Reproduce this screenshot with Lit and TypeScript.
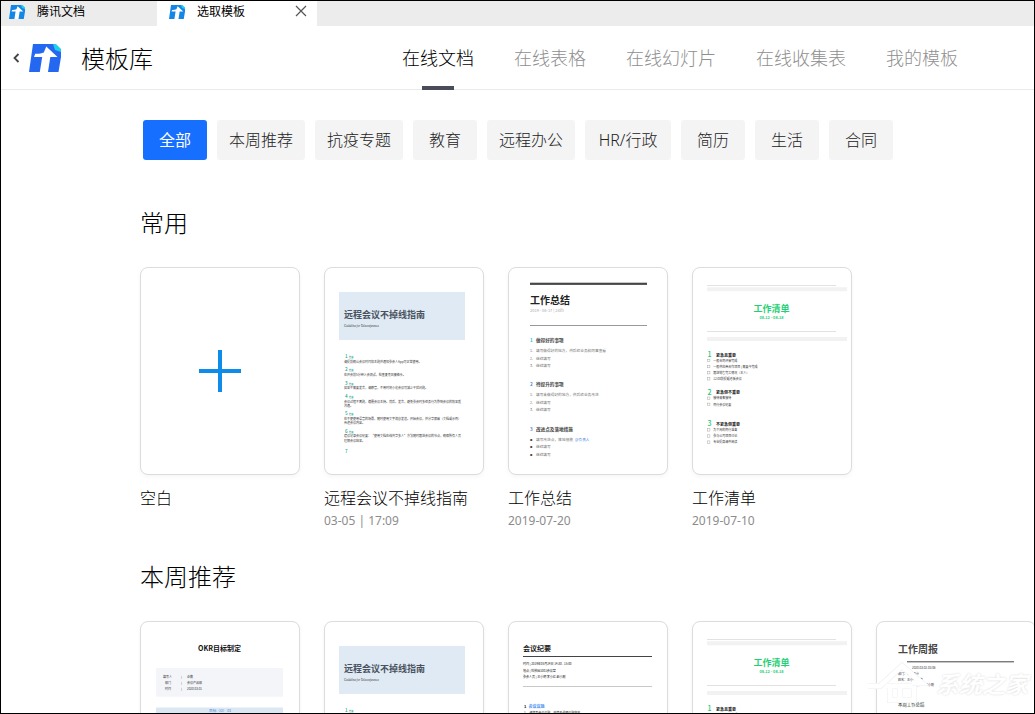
import { LitElement, html, svg, css } from "lit";
import { customElement, property, state } from "lit/decorators.js";
import { classMap } from "lit/directives/class-map.js";

type Line = [x: number, y: number, text: string, cls?: string];

const lines = (items: Line[]) =>
  items.map(([x, y, text, cls]) => svg`<text class=${cls ?? "body"} x=${x} y=${y}>${text}</text>`);

const guide = () => svg`
  <rect x="15" y="25" width="126" height="48" fill="#dfeaf4"/>
  <text class="kai" x="20" y="51">远程会议不掉线指南</text>
  <text class="en" x="20" y="59.5">Guideline for Teleconference</text>
  ${[90, 103.5, 117, 130.5, 147.5, 165, 185].map(
    (y, i) => svg`<text class="step" x="21" y=${y + 0.8}>${i + 1}</text><text class="tag" x="24.5" y=${y + 0.8}>${i < 6 ? "准备" : "…"}</text>`
  )}
  ${lines([
    [20, 95.5, "请提前确认会议时间和主题并通知参会人App可正常使用。"],
    [20, 109, "在开会前5分钟入会测试，检查麦克风摄像头。"],
    [20, 122.3, "如果不需要发言，请静音，不用时将小化会议可减少干扰问题。"],
    [20, 136, "会议过程不离题，遵循会议主持。然后，发言，避免参会时多任务行为影响会议的效果质"],
    [20, 140.2, "沟通。"],
    [20, 153, "在不便使用语音的场景，随时使用文字消息发送。开始会议，并分享屏幕（文档或示例）"],
    [20, 157.4, "传递会议内容。"],
    [20, 170.4, "建议记录会议纪要：“使用文档在线共享多人”方法随时跟进会议的节点，确保所有人员"],
    [20, 174.8, "理解会议结果。"],
  ])}`;

const summary = () => svg`
  <rect x="22" y="15.7" width="117" height="2.2" fill="#4a4646"/>
  <text class="h10" x="22" y="37">工作总结</text>
  <text class="pale" x="22" y="45">2019 - 06-17 | 24th</text>
  <rect x="22" y="58" width="117" height="1" fill="#999"/>
  ${[
    [73.3, "做得好的事项", "#27c3c6", "填写做得好的地方，供后续业务和同事查看", "继续填写", "继续填写"],
    [117.3, "待提升的事项", "#3f84d9", "填写未做得好的地方，供后续业务改进", "继续填写", "继续填写"],
    [161.7, "改进点及落地措施", "#6a7fd0", "填写改进点，落地措施", "继续填写", "继续填写"],
  ].map(([y, title, color, ...items], s) => svg`
    <text class="h45" x="22" y=${+y + 2} style="fill:${color}">${s + 1}</text>
    <text class="h45" x="28" y=${+y + 1.8}>${title}</text>
    ${items.map((t, i) => svg`
      <text class=${s === 2 ? "dot" : "item"} x="22" y=${+y + 11.8 + i * 7.6}>${s === 2 ? "●" : `${i + 1}.`}</text>
      <text class="item" x="28" y=${+y + 11.8 + i * 7.6}>${t}</text>`)}`)}
  <text class="blue" x="67" y="173.5">@负责人</text>`;

const checklist = () => svg`
  <path d="M15 18.5h129M15 64.5h129" stroke="#e2e2e2" stroke-width="1.2"/>
  <path d="M15 22.3h140M15 72h140" stroke="#f2f2f3" stroke-width="4"/>
  <text class="green9" x="79.5" y="45">工作清单</text>
  <text class="green3" x="79.5" y="52.3">08.12 - 08.18</text>
  ${[
    [87.3, "紧急且重要", "一般合同评审完成", "一般供应商合作项目 | 需要今完成", "跟进销售完工情况（本人）", "12:00前提醒老板会议"],
    [125, "紧急但不重要", "接待来客接待", "例行会议纪要"],
    [156.7, "不紧急但重要", "为下周的例行准备", "参与公司项目讨论", "专业提高课件阅读"],
  ].map(([y, title, ...items], s) => svg`
    <text class="num" x="15.5" y=${+y + 2.6}>${s + 1}</text>
    <text class="h4" x="24" y=${+y + 2.2}>${title}</text>
    ${items.map((t, i) => svg`
      <rect x="15.5" y=${+y + 5 + i * 6.1} width="2.4" height="2.4" fill="none" stroke="#aaa" stroke-width="0.5"/>
      <text class="body" x="21.3" y=${+y + 7.4 + i * 6.1}>${t}</text>`)}`)}`;

const okr = () => svg`
  <text class="h75" x="79.5" y="30.3">OKR目标制定</text>
  <rect x="16" y="47" width="127" height="28.7" fill="#f4f5f9"/>
  ${lines([
    [23, 57, "填写人"], [41, 57, "|"], [47, 57, "企鹅"],
    [25, 63, "部门"], [41, 63, "|"], [47, 63, "会议产品部"],
    [25, 69, "时间"], [41, 69, "|"], [47, 69, "2020.03.01"],
  ])}
  <rect x="16" y="86.5" width="127" height="40" fill="#dbe8f4"/>
  <text class="blue" x="69" y="91">目标（O） 01</text>`;

const minutes = () => svg`
  <text class="h7" x="15" y="30">会议纪要</text>
  <rect x="15" y="35" width="129" height="1" fill="#444"/>
  ${lines([
    [15, 44.2, "时间 | 2019年05月24日 14:30 - 15:00", "dark"],
    [15, 50.5, "地点 | 科技园1001会议室", "dark"],
    [15, 56.5, "参会人员 | 王小明 李小红 赵小刚", "dark"],
  ])}
  <rect x="15" y="65" width="129" height="0.8" fill="#bbb"/>
  <text class="h4" x="16" y="87">1</text>
  <text class="blue4" x="20.5" y="87">会议议题</text>
  <text class="dark" x="16" y="93">1、 请填写会议议题，并简要说明议题内容</text>`;

const weekly = () => svg`
  <text class="h10m" x="22" y="32">工作周报</text>
  <rect x="31" y="40.3" width="107" height="1" fill="#444"/>
  ${lines([
    [36, 48.2, "2020.03.02-03.06"],
    [22, 53.5, "部门：产品设计"],
    [22, 59.5, "姓名：王小明 企鹅"],
    [22, 65, "周报对象：李小红、赵小刚"],
  ])}
  <text class="h44" x="22" y="85.3">本周工作总结</text>`;

const thumbs: Record<string, () => unknown> = { guide, summary, checklist, okr, minutes, weekly };

@customElement("docs-logo")
class DocsLogo extends LitElement {
  @property({ type: Boolean }) small = false;
  static styles = css`
    :host { display: block; flex: none; }
    svg { display: block; width: 100%; height: 100%; }
  `;
  render() {
    const main = this.small ? "#1487e6" : "#2468f2";
    return html`<svg viewBox="0 0 32 28" aria-hidden="true">
      <path d="M4 0H25L32 7V13L29.5 28H0Z" fill=${main}/>
      <path d="M24 0H27L32 5V8L26 6Z" fill="#1fd0e8"/>
      <path d="M17.3 2.5 28.5 13H21.3L19 28H10.8L13.2 13H5L6.2 9.8C9.5 10 12.5 9.5 14.8 8.4Z" fill="#fff"/>
    </svg>`;
  }
}

@customElement("template-card")
class TemplateCard extends LitElement {
  @property() kind = "";
  @property() name = "";
  @property() date = "";
  static styles = css`
    :host { display: block; width: 160px; flex: none; }
    .link { display: block; color: #000; text-decoration: none; }
    .sheet {
      display: flex; align-items: center; justify-content: center;
      box-sizing: border-box; height: 208px; overflow: hidden;
      border: 1px solid #dcdcdc; border-radius: 8px; background: #fff;
      box-shadow: 0 2px 4px rgba(0, 0, 0, 0.04);
    }
    .thumb { display: block; width: 100%; height: 100%; }
    .plus { width: 42px; height: 42px; }
    .name { margin-top: 10px; font-size: 16px; line-height: 24px; font-weight: 300; white-space: nowrap; }
    .date { margin-top: 2px; font-family: "Noto Sans", "Noto Sans CJK SC", sans-serif; font-size: 12px; line-height: 20px; color: #8c8c8c; }
    text { fill: #444; font-size: 3px; }
    .kai { font-size: 9px; font-weight: 700; fill: #4a525e; }
    .en { font: italic 3px "Liberation Serif", serif; fill: #333; }
    .step { font-size: 4.6px; font-weight: 500; fill: #22a892; }
    .tag { font-size: 2.6px; fill: #22a892; }
    .body { fill: #333; }
    .dark { fill: #111; }
    .pale { font-size: 4px; fill: #aaa; }
    .item { font-size: 3.7px; fill: #777; }
    .dot { font-size: 2.4px; fill: #444; }
    .h10 { font-size: 10px; font-weight: 700; fill: #222; }
    .h10m { font-size: 10px; font-weight: 700; fill: #484848; }
    .h75 { font-size: 7px; font-weight: 700; fill: #111; text-anchor: middle; }
    .h7 { font-size: 7px; font-weight: 700; fill: #222; }
    .h45 { font-size: 4.6px; font-weight: 700; }
    .h44 { font-size: 4.4px; fill: #222; }
    .h4 { font-size: 4px; font-weight: 700; fill: #222; }
    .num { font-size: 7px; font-weight: 500; fill: #22c777; }
    .green9 { font-size: 9px; font-weight: 700; fill: #1fd075; text-anchor: middle; }
    .green3 { font-size: 3.9px; font-weight: 700; fill: #1fd075; text-anchor: middle; }
    .blue { font-size: 3.7px; fill: #4d86d8; }
    .blue4 { font-size: 4px; font-weight: 700; fill: #4a90f0; }
  `;
  render() {
    const draw = thumbs[this.kind];
    return html`<a class="link" href="#">
      <div class="sheet">
        ${draw
          ? html`<svg class="thumb" viewBox="1 1 158 206" aria-hidden="true">${draw()}</svg>`
          : html`<svg class="plus" viewBox="0 0 42 42" aria-hidden="true"><path d="M21 0V42M0 21H42" stroke="#0f8bea" stroke-width="4"/></svg>`}
      </div>
      <div class="name">${this.name}</div>
      ${this.date ? html`<div class="date">${this.date}</div>` : ""}
    </a>`;
  }
}

@customElement("app-root")
class AppRoot extends LitElement {
  @state() tab = "在线文档";
  @state() filter = "全部";
  static styles = css`
    :host {
      display: flex; flex-direction: column; position: relative;
      box-sizing: border-box; height: 100vh; overflow: hidden;
      border: 1px solid #000; background: #fff; color: #000;
      font-family: "Noto Sans CJK SC", sans-serif;
    }
    button { border: 0; padding: 0; background: none; color: inherit; font: inherit; cursor: pointer; }
    .tabs { display: flex; flex: none; height: 25px; background: #ececec; }
    .tab { display: flex; align-items: flex-start; box-sizing: border-box; width: 156px; padding: 0 8px; font-size: 12px; line-height: 20px; }
    .tab.active { width: 160px; padding: 0 10px 0 12px; background: #fff; }
    .tab-logo { width: 16px; height: 14px; margin-top: 4px; }
    .tab-name { flex: 1; margin-left: 12px; }
    .close { display: block; width: 12px; height: 12px; margin-top: 4px; }
    .icon { display: block; width: 100%; height: 100%; }
    .header { display: flex; flex: none; align-items: center; box-sizing: border-box; height: 64px; padding: 0 76px 0 11px; border-bottom: 1px solid #e8eaed; }
    .back { width: 8px; height: 10px; margin-right: 9px; }
    .logo { width: 32px; height: 28px; }
    .title { margin: 0 0 0 20px; font-size: 24px; line-height: 36px; font-weight: 300; }
    .nav { display: flex; gap: 40px; height: 64px; margin-left: auto; }
    .nav-item { position: relative; height: 64px; padding-bottom: 2px; font-size: 18px; font-weight: 300; color: #8f8f8f; white-space: nowrap; }
    .nav-item.on { color: #000; }
    .nav-item.on::after { content: ""; position: absolute; bottom: 0; left: 50%; width: 32px; height: 4px; margin-left: -16px; background: #4a4c59; }
    .main { flex: 1; min-height: 0; overflow: hidden; padding: 30px 0 0 139px; }
    .chips { display: flex; gap: 10px; padding-left: 3px; }
    .chip { min-width: 64px; height: 40px; padding: 0 12px 2px; border-radius: 3px; background: #f4f4f4; color: #222; font-family: "Noto Sans", "Noto Sans CJK SC", sans-serif; font-size: 16px; font-weight: 300; white-space: nowrap; }
    .chip.wide { min-width: 86px; }
    .chip.on { background: #176fff; color: #fff; font-weight: 400; }
    .heading { margin: 44px 0 27px; font-size: 24px; line-height: 36px; font-weight: 300; }
    .heading.next { margin-top: 27px; }
    .row { display: flex; gap: 24px; }
    .mark { position: absolute; right: 6px; bottom: 8px; display: flex; align-items: center; gap: 8px; color: #fff; font-size: 23px; font-weight: 700; font-style: italic; line-height: 36px; text-shadow: 0 0 2px #d4d4d4; pointer-events: none; }
    .house { width: 62px; height: 44px; }
  `;
  render() {
    const nav = ["在线文档", "在线表格", "在线幻灯片", "在线收集表", "我的模板"];
    const chips = ["全部", "本周推荐", "抗疫专题", "教育", "远程办公", "HR/行政", "简历", "生活", "合同"];
    const house = "M2 25H14L36 5 56 22H46M20 25H46M24 25V39H48V25M34 25V39";
    return html`
      <div class="tabs">
        <div class="tab"><docs-logo class="tab-logo" small></docs-logo><span class="tab-name">腾讯文档</span></div>
        <div class="tab active">
          <docs-logo class="tab-logo" small></docs-logo><span class="tab-name">选取模板</span>
          <button class="close" aria-label="关闭"><svg class="icon" viewBox="0 0 12 12"><path d="M1 1 11 11M11 1 1 11" stroke="#555" stroke-width="1.2"/></svg></button>
        </div>
      </div>
      <header class="header">
        <button class="back" aria-label="返回"><svg class="icon" viewBox="0 0 8 10"><path d="M6.5 1 2.5 5 6.5 9" fill="none" stroke="#444" stroke-width="1.8"/></svg></button>
        <docs-logo class="logo"></docs-logo>
        <h1 class="title">模板库</h1>
        <nav class="nav">
          ${nav.map((n) => html`<button class=${classMap({ "nav-item": true, on: n === this.tab })} @click=${() => (this.tab = n)}>${n}</button>`)}
        </nav>
      </header>
      <main class="main">
        <div class="chips">
          ${chips.map((c) => html`<button class=${classMap({ chip: true, wide: c.length > 3, on: c === this.filter })} @click=${() => (this.filter = c)}>${c}</button>`)}
        </div>
        <h2 class="heading">常用</h2>
        <div class="row">
          <template-card name="空白"></template-card>
          <template-card kind="guide" name="远程会议不掉线指南" date="03-05 | 17:09"></template-card>
          <template-card kind="summary" name="工作总结" date="2019-07-20"></template-card>
          <template-card kind="checklist" name="工作清单" date="2019-07-10"></template-card>
        </div>
        <h2 class="heading next">本周推荐</h2>
        <div class="row">
          <template-card kind="okr" name="OKR目标制定"></template-card>
          <template-card kind="guide" name="远程会议不掉线指南"></template-card>
          <template-card kind="minutes" name="会议纪要"></template-card>
          <template-card kind="checklist" name="工作清单"></template-card>
          <template-card kind="weekly" name="工作周报"></template-card>
        </div>
      </main>
      <div class="mark">
        <svg class="house" viewBox="0 0 62 44" aria-hidden="true"><path d=${house} fill="none" stroke="#ececec" stroke-width="6"/><path d=${house} fill="none" stroke="#fff" stroke-width="5"/></svg>
        <span>系统之家</span>
      </div>`;
  }
}
